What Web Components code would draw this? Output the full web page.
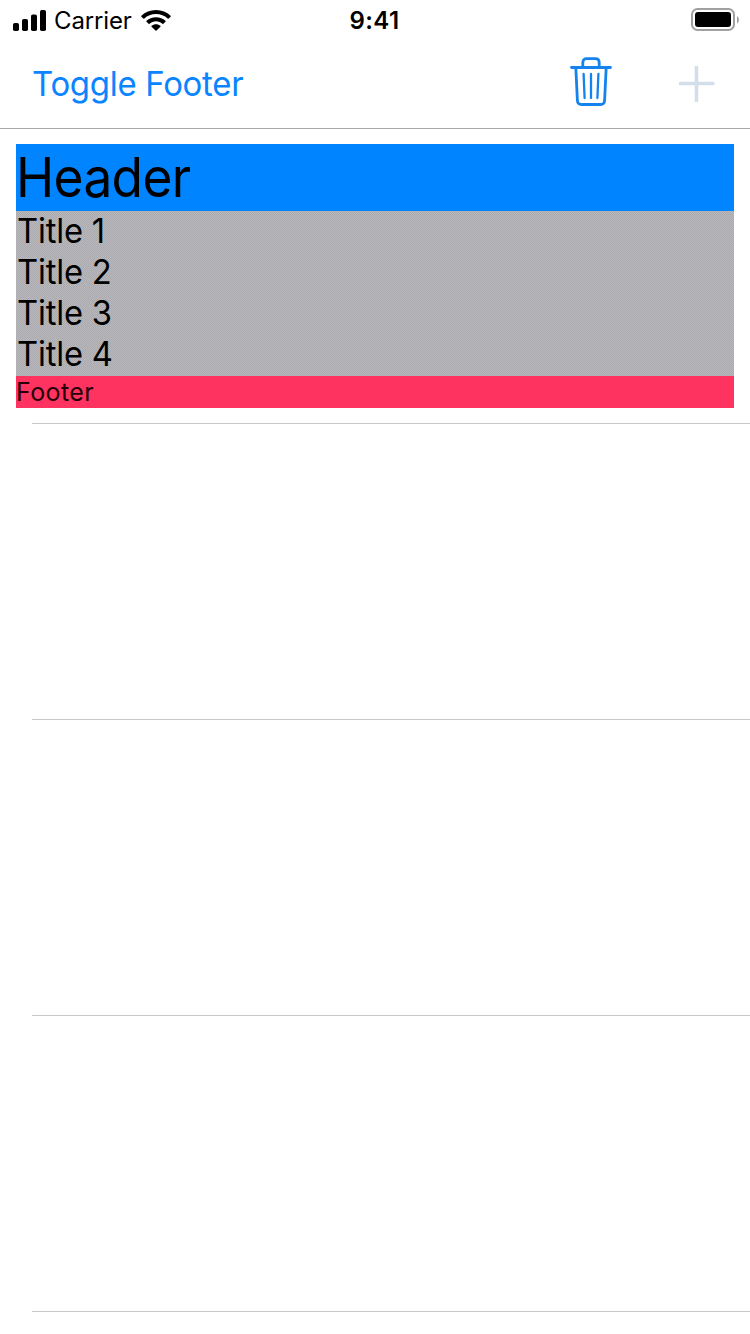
<!DOCTYPE html>
<html lang="en">
<head>
<meta charset="utf-8">
<meta name="viewport" content="width=750">
<title>Toggle Footer</title>
<style>
html,body{margin:0;background:#fff;height:1334px;overflow:hidden;font-family:Inter,"Liberation Sans",sans-serif;color:#000}
</style>
</head>
<body>
<app-screen></app-screen>
<script>
const define = (name, html) => customElements.define(name, class extends HTMLElement {
  constructor() {
    super();
    this.attachShadow({ mode: 'open' }).innerHTML = html;
  }
});

define('signal-icon', `<style>:host{display:block;width:34px;height:22px}svg{display:block}</style>
<svg width="34" height="22" viewBox="0 0 34 22"><rect x="0" y="13" width="6" height="8" rx="1.8"/><rect x="9" y="9" width="6" height="12" rx="1.8"/><rect x="18" y="4.500" width="6" height="16.500" rx="1.800"/><rect x="27" y="0" width="6" height="21" rx="1.800"/></svg>`);

define('wifi-icon', `<style>:host{display:block;width:30px;height:22px}svg{display:block}</style>
<svg width="30" height="22" viewBox="0 0 30 22"><path d="M15 0C9.300 0 4.200 2.100.4 5.700c-.3.300-.3.700 0 1l1.900 1.900c.3.300.700.3 1 0C6.400 5.700 10.500 4.100 15 4.100s8.600 1.600 11.700 4.500c.3.300.700.3 1 0l1.900-1.900c.3-.3.3-.7 0-1C25.800 2.100 20.700 0 15 0Z"/><path d="M15 7.200c-3.700 0-7 1.400-9.500 3.600-.3.300-.3.700 0 1l2.100 2c.3.300.700.3 1 0 1.700-1.500 3.900-2.500 6.400-2.500s4.700 1 6.400 2.500c.3.300.700.3 1 0l2.100-2c.3-.3.3-.7 0-1C22 8.600 18.700 7.200 15 7.200Z"/><path d="M15 14.300c-1.700 0-3.200.6-4.400 1.500-.3.300-.3.600 0 .9l3.900 3.900c.3.300.700.3 1 0l3.900-3.900c.3-.3.3-.6 0-.9-1.200-.9-2.700-1.500-4.400-1.500Z"/></svg>`);

define('battery-icon', `<style>:host{display:block;width:50px;height:24px}svg{display:block}</style>
<svg width="50" height="24" viewBox="0 0 50 24"><rect x="1" y="1" width="42" height="21" rx="5.500" fill="none" stroke="#a0a0a0" stroke-width="2"/><rect x="4" y="4" width="36" height="15" rx="3"/><path d="M46 8c1.200.8 1.900 2 1.900 3.700S47.200 14.700 46 15.500Z" fill="#a0a0a0"/></svg>`);

define('trash-icon', `<style>:host{display:block;width:42px;height:50px}svg{display:block}</style>
<svg width="42" height="50" viewBox="0 0 42 50" fill="none" stroke="#1583ee" stroke-width="2.800" stroke-linecap="round" stroke-linejoin="round"><path d="M1.500 10.500H40.500M12.800 10V5.500Q12.800 1.700 16.700 1.700H25.300Q29.200 1.700 29.200 5.500V10M5.800 10.500L7.400 43.500Q7.600 47.500 11.600 47.500H30.400Q34.400 47.500 34.600 43.500L36.200 10.500"/><path stroke-width="2.300" d="M13.600 17L14.600 41M21 17V41M28.400 17L27.400 41"/></svg>`);

define('plus-icon', `<style>:host{display:block;width:36px;height:36px}svg{display:block}</style>
<svg width="36" height="36" viewBox="0 0 36 36"><path d="M17.500 1.500V34.500M1.500 17.500H34" stroke="#d2dfea" stroke-width="3.600" stroke-linecap="round"/></svg>`);

define('status-bar', `<style>
:host{display:grid;grid-template-columns:1fr auto 1fr;grid-template-rows:40px;height:40px;box-sizing:border-box;padding:0 9px 0 13px;align-items:center}
.left{display:flex;align-items:center}
signal-icon{margin-top:1px}
.carrier{font-size:24px;line-height:40px;padding-top:2px;margin:0 0 0 7px;width:87px;letter-spacing:-.15px;white-space:nowrap}
wifi-icon{margin-top:1px}
.time{font-size:24px;font-weight:600;line-height:40px;padding-top:2px;margin-left:-5px;letter-spacing:.4px}
battery-icon{justify-self:end;margin-top:-1px}
</style><div class="left"><signal-icon></signal-icon><span class="carrier">Carrier</span><wifi-icon></wifi-icon></div><span class="time">9:41</span><battery-icon></battery-icon>`);

define('nav-bar', `<style>
:host{display:flex;height:89px;box-sizing:border-box;border-bottom:1px solid #aaa;padding:0 35px 0 32px;align-items:center}
.title{font-size:34px;line-height:88px;color:#0a84ff;margin-right:auto;letter-spacing:-.3px;white-space:nowrap;transform:scaleX(.969);transform-origin:0 50%}
trash-icon{margin:-4px 67px 0 0}
</style><span class="title"><slot></slot></span><trash-icon></trash-icon><plus-icon></plus-icon>`);

define('group-card', `<style>
:host{display:block}
.header{background:#0084ff;height:67px;line-height:66px;font-size:55px;letter-spacing:-.7px}
.header slot{display:block;transform:scaleX(.935);transform-origin:0 50%}
.items{height:165px;background:repeating-conic-gradient(#aaaaae 0 25%,#b9b9bd 0 50%) 0 0/2px 2px}
.footer{background:#ff335f;color:#260008;height:32px;line-height:32px;font-size:25px;letter-spacing:.4px}
</style><div class="header"><slot name="header"></slot></div><div class="items"><slot></slot></div><div class="footer"><slot name="footer"></slot></div>`);

define('title-line', `<style>:host{display:block;height:41px;line-height:40px;font-size:34px;letter-spacing:-.2px;padding-left:.5px;box-sizing:border-box;white-space:nowrap}
slot{display:block;transform:scaleX(.963);transform-origin:0 50%}</style><slot></slot>`);

define('table-row', `<style>
:host{display:flex;flex-direction:column;height:296px;box-sizing:border-box}
:host([first]){height:295px}
.content{flex:1;padding:15px 16px 0}
.line{height:1px;margin-left:32px;background:#c9c9cb}
</style><div class="content"><slot></slot></div><div class="line"></div>`);

define('app-screen', `<style>:host{display:block;width:750px;height:1334px;background:#fff;overflow:hidden}</style>
<status-bar></status-bar>
<nav-bar>Toggle Footer</nav-bar>
<table-row first><group-card><span slot="header">Header</span><title-line>Title 1</title-line><title-line>Title 2</title-line><title-line>Title 3</title-line><title-line>Title 4</title-line><span slot="footer">Footer</span></group-card></table-row>
<table-row></table-row><table-row></table-row><table-row></table-row>`);
</script>
</body>
</html>
